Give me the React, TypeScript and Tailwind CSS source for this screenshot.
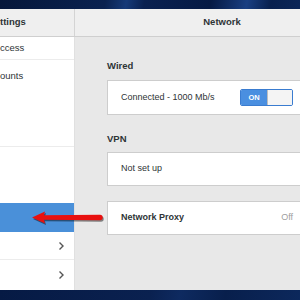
import React from "react";

function Chevron() {
  return (
    <svg width="8" height="10" viewBox="0 0 8 10" className="text-[#555]">
      <path d="M2.5 1.5 L6 5 L2.5 8.5" fill="none" stroke="currentColor" strokeWidth="1.4" />
    </svg>
  );
}

export default function App() {
  return (
    <div
      className="relative w-[300px] h-[300px] overflow-hidden flex flex-col text-[#2e3436] text-[9px]"
      style={{ fontFamily: '"Liberation Sans", Arial, sans-serif' }}
    >
      <div className="h-[9px] bg-[linear-gradient(100deg,#06173a_0%,#0a2250_35%,#163a78_42%,#0a2150_48%,#061a44_70%,#1a3f82_82%,#08204e_90%,#0b2658_100%)]" />
      <div className="flex-1 flex flex-col">
        <div className="h-[28px] flex bg-[#efefef] border-b border-[#cfcfcf] overflow-hidden">
          <div className="w-[75px] shrink-0 border-r border-[#d4d4d4] flex items-center font-bold text-[9.5px]">ttings</div>
          <div className="w-[294px] shrink-0 flex items-center justify-center font-bold text-[9.5px]">Network</div>
        </div>
        <div className="flex-1 flex">
          <div className="w-[75px] bg-white border-r border-[#e0e0e0] flex flex-col">
            <div className="h-[23px] border-b border-[#ececec] flex items-start pt-[4px] text-[9.5px]">ccess</div>
            <div className="h-[87px] border-b border-[#ececec] pt-[9px] text-[9.5px]">ounts</div>
            <div className="h-[56px]" />
            <div className="h-[29px] bg-[#4a90d9]" />
            <div className="h-[28px] border-b border-[#ececec] flex items-center justify-end pr-[9px]">
              <Chevron />
            </div>
            <div className="h-[29px] flex items-center justify-end pr-[9px]">
              <Chevron />
            </div>
          </div>
          <div className="flex-1 bg-[#e8e8e8] pl-[32px] pt-[22px] overflow-hidden flex flex-col">
            <div className="h-[14px] leading-[14px] font-bold mb-[7px] text-[9.5px]">Wired</div>
            <div className="w-[200px] h-[35px] bg-white border border-[#cdcdcd] flex items-center justify-between px-[13px]">
              <span>Connected - 1000 Mb/s</span>
              <div className="flex h-[17px] w-[53px] rounded-[2px] overflow-hidden border border-[#3a7cd0]">
                <div className="w-[26px] bg-[#4a8fe0] text-white text-[7.5px] font-bold flex items-center justify-center">ON</div>
                <div className="flex-1 bg-[#f4f4f4] border-l border-[#bdbdbd]" />
              </div>
            </div>
            <div className="h-[14px] leading-[14px] font-bold mt-[17px] mb-[6px] text-[9.5px]">VPN</div>
            <div className="w-[200px] h-[34px] bg-white border border-[#cdcdcd] flex items-center px-[13px]">
              <span>Not set up</span>
            </div>
            <div className="w-[200px] h-[34px] mt-[15px] bg-white border border-[#cdcdcd] flex items-center justify-between px-[13px]">
              <span className="font-bold">Network Proxy</span>
              <span className="text-[#a0a0a0]">Off</span>
            </div>
          </div>
        </div>
      </div>
      <div className="h-[10px] bg-[linear-gradient(100deg,#061a44_0%,#0a2150_50%,#0e2a60_60%,#081f4c_75%,#0c285c_100%)]" />
      <svg className="absolute left-[28px] top-[209px]" width="82" height="20" viewBox="0 0 82 20">
        <g transform="translate(1,1.5)" fill="#000" opacity="0.45">
          <path d="M4 8.5 L17 2.5 L16 6.3 L72 5.8 A2.7 2.7 0 0 1 72 11.2 L16 10.7 L17 14.5 Z" />
        </g>
        <path d="M4 8.5 L17 2.5 L16 6.3 L72 5.8 A2.7 2.7 0 0 1 72 11.2 L16 10.7 L17 14.5 Z" fill="#e8100f" />
      </svg>
    </div>
  );
}
